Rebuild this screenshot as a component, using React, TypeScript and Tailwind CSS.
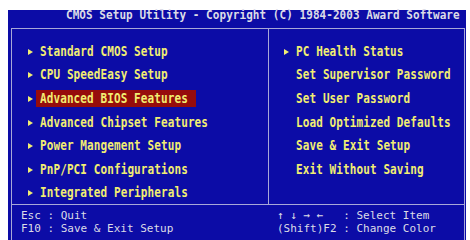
import React from "react";

const leftItems = [
  "Standard CMOS Setup",
  "CPU SpeedEasy Setup",
  "Advanced BIOS Features",
  "Advanced Chipset Features",
  "Power Mangement Setup",
  "PnP/PCI Configurations",
  "Integrated Peripherals",
];

const rightItems = [
  { label: "PC Health Status", arrow: true },
  { label: "Set Supervisor Password", arrow: false },
  { label: "Set User Password", arrow: false },
  { label: "Load Optimized Defaults", arrow: false },
  { label: "Save & Exit Setup", arrow: false },
  { label: "Exit Without Saving", arrow: false },
];

const Bullet = () => (
  <svg width="5" height="6" viewBox="0 0 5 6" className="block">
    <polygon points="0,0 5,3 0,6" fill="#f2ee72" />
  </svg>
);

const MenuRow = ({
  label,
  arrow,
  active = false,
}: {
  label: string;
  arrow: boolean;
  active?: boolean;
}) => (
  <div className="h-[23.6px] flex items-center">
    <span className="w-[8px] flex items-center">{arrow && <Bullet />}</span>
    <span
      className={
        active
          ? "h-[17px] flex items-center pl-[4px] pr-[8px] bg-[#960c0c]"
          : "h-[17px] flex items-center pl-[4px] pr-[8px]"
      }
    >
      <span className="inline-block scale-y-[1.2]">{label}</span>
    </span>
  </div>
);

export default function App() {
  return (
    <div className="w-[470px] h-[240px] bg-white pl-[8px] pt-[10px] overflow-hidden font-['DejaVu_Sans_Mono','Liberation_Mono',monospace] text-[11px] whitespace-pre">
      <div className="w-[458px] h-[230px] bg-[#0c0ca6] flex flex-col">
        {/* title */}
        <div className="h-[18px] pl-[58px] leading-[12px] font-bold text-[#dcdce6] tracking-[0.05px]">
          <span className="inline-block scale-y-[1.15]">
            CMOS Setup Utility - Copyright (C) 1984-2003 Award Software
          </span>
        </div>

        {/* frame */}
        <div className="ml-[3px] w-[454px] flex-1 border-t border-l border-r border-[#a8a8d8] flex flex-col">
          <div className="h-[175px] grid grid-cols-[256px_1fr] text-[#f2ee72] font-bold leading-[12px] tracking-[0.1px]">
            <div className="pt-[11px] pl-[16px]">
              {leftItems.map((item, i) => (
                <MenuRow key={item} label={item} arrow active={i === 2} />
              ))}
            </div>
            <div className="border-l border-[#a8a8d8] pt-[11px] pl-[15px]">
              {rightItems.map((item) => (
                <MenuRow key={item.label} label={item.label} arrow={item.arrow} />
              ))}
            </div>
          </div>

          {/* footer */}
          <div className="flex-1 border-t border-[#a8a8d8] grid grid-cols-[265px_1fr] pt-[5px] text-[#dcdce6] leading-[12.6px]">
            <div className="pl-[9px]">
              <div>Esc : Quit</div>
              <div>F10 : Save &amp; Exit Setup</div>
            </div>
            <div>
              <div>↑ ↓ → ←   : Select Item</div>
              <div>(Shift)F2 : Change Color</div>
            </div>
          </div>
        </div>
      </div>
    </div>
  );
}
